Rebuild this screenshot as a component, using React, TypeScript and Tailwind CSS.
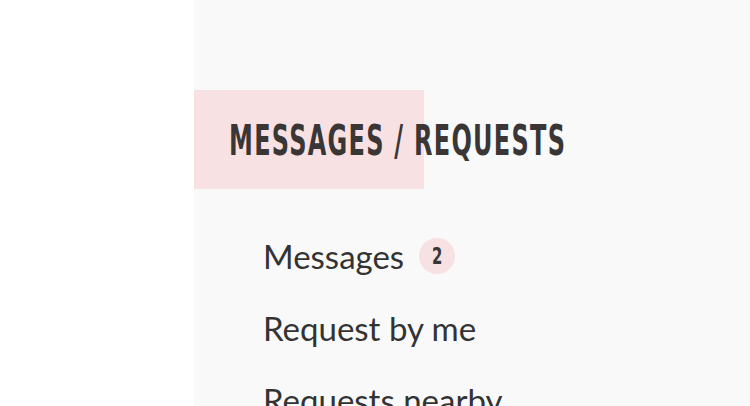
import React from "react";

const condensed = { fontFamily: "'DejaVu Sans','Liberation Sans',sans-serif" };

export default function App() {
  return (
    <div className="flex w-[750px] h-[406px] overflow-hidden">
      <div className="w-[194px] shrink-0 bg-white" />
      <div className="flex-1 bg-[#f9f9f9] pt-[90px]">
        <div className="relative h-[99px] flex items-center">
          <div className="absolute left-0 top-0 h-full w-[230px] bg-[#f8e1e3]" />
          <h1
            className="relative ml-[35px] mt-[2px] whitespace-nowrap text-[42px] leading-none font-bold font-stretch-condensed tracking-[2px] text-[#3a3636] uppercase origin-left scale-x-[0.635]"
            style={condensed}
          >
            Messages / Requests
          </h1>
        </div>
        <ul
          className="pl-[69px] pt-[46px] flex flex-col gap-[30px] text-[33px] leading-[42px] text-[#333]"
          style={{ fontFamily: "Lato, sans-serif" }}
        >
          <li className="flex items-center gap-[15px]">
            <span>Messages</span>
            <span className="w-[36px] h-[36px] rounded-full bg-[#f8e1e3] flex items-center justify-center">
              <span
                className="text-[23px] leading-none font-bold font-stretch-condensed text-[#3a3636] scale-x-[0.72]"
                style={condensed}
              >
                2
              </span>
            </span>
          </li>
          <li className="whitespace-nowrap">Request by me</li>
          <li className="whitespace-nowrap">Requests nearby</li>
        </ul>
      </div>
    </div>
  );
}
